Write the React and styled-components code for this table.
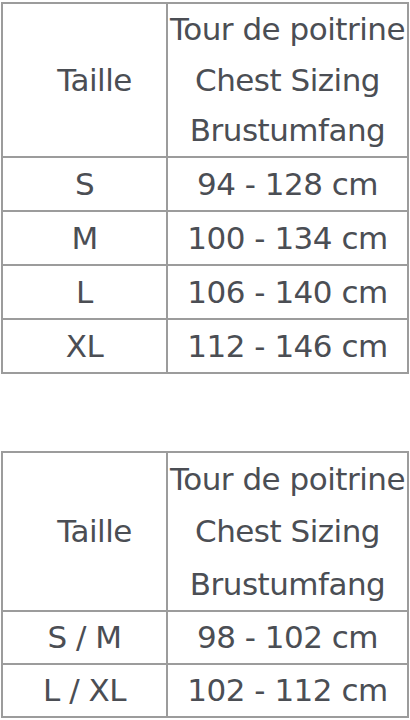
import styled, { createGlobalStyle } from "styled-components";

const GlobalStyle = createGlobalStyle`
  html, body {
    margin: 0;
    padding: 0;
    background: #ffffff;
  }
`;

const Page = styled.div`
  display: flex;
  flex-direction: column;
  gap: 77px;
  padding: 2px 3px 0 1px;
  width: 406px;
`;

const Table = styled.table`
  width: 406px;
  border-collapse: collapse;
  table-layout: fixed;
  border: 2px solid #9c9c9c;
  font-family: "DejaVu Sans", Verdana, sans-serif;
  font-size: 31px;
  letter-spacing: -0.5px;
  color: #4b4e54;
`;

const Cell = styled.td`
  border: 2px solid #9c9c9c;
  padding: 0 0 0 ${(p) => p.$indent || 0}px;
  text-align: center;
  vertical-align: middle;
  white-space: nowrap;
  height: ${(p) => p.$h}px;
  line-height: ${(p) => p.$lh || p.$h}px;
`;

const SizeCol = styled.col`
  width: 165px;
`;

const ChestCol = styled.col`
  width: 241px;
`;

function SizeTable({ rows, headerLine, rowHeight }) {
  return (
    <Table>
      <colgroup>
        <SizeCol />
        <ChestCol />
      </colgroup>
      <tbody>
        <tr>
          <Cell $h={headerLine * 3} $lh={headerLine} $indent={20}>
            Taille
          </Cell>
          <Cell $h={headerLine * 3} $lh={headerLine}>
            Tour de poitrine
            <br />
            Chest Sizing
            <br />
            Brustumfang
          </Cell>
        </tr>
        {rows.map(([size, range]) => (
          <tr key={size}>
            <Cell $h={rowHeight}>{size}</Cell>
            <Cell $h={rowHeight}>{range}</Cell>
          </tr>
        ))}
      </tbody>
    </Table>
  );
}

export default function App() {
  return (
    <>
      <GlobalStyle />
      <Page>
        <SizeTable
          headerLine={50.5}
          rowHeight={52}
          rows={[
            ["S", "94 - 128 cm"],
            ["M", "100 - 134 cm"],
            ["L", "106 - 140 cm"],
            ["XL", "112 - 146 cm"],
          ]}
        />
        <SizeTable
          headerLine={52.6}
          rowHeight={51}
          rows={[
            ["S / M", "98 - 102 cm"],
            ["L / XL", "102 - 112 cm"],
          ]}
        />
      </Page>
    </>
  );
}
